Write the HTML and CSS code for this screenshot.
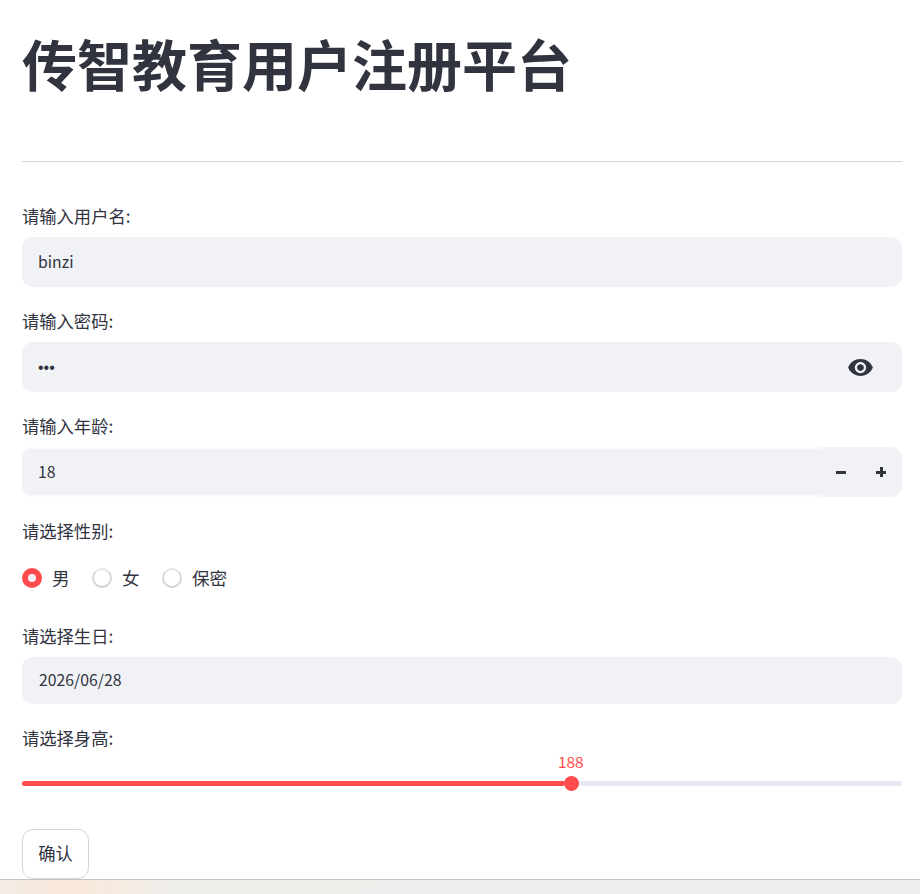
FILE: index.html
```html
<!DOCTYPE html>
<html>

<head>
    <meta charset="utf-8">
    <title>传智教育用户注册平台</title>
    <link rel="stylesheet" href="styles.css">
</head>

<body>

    <main class="page">
        <h1 class="title">传智教育用户注册平台</h1>
        <hr class="divider">

        <div class="field">
            <p class="label">请输入用户名:</p>
            <div class="box">binzi</div>
        </div>

        <div class="field">
            <p class="label">请输入密码:</p>
            <div class="box">
                <span class="dots">•••</span>
                <svg class="eye" viewBox="0 0 24 24" width="27" height="27">
                    <path fill="#31333f" d="M12 4.5C7 4.5 2.73 7.61 1 12c1.73 4.39 6 7.5 11 7.5s9.27-3.11 11-7.5c-1.73-4.39-6-7.5-11-7.5zM12 17c-2.76 0-5-2.24-5-5s2.24-5 5-5 5 2.24 5 5-2.24 5-5 5zm0-8c-1.66 0-3 1.34-3 3s1.34 3 3 3 3-1.34 3-3-1.34-3-3-3z"/>
                </svg>
            </div>
        </div>

        <div class="field">
            <p class="label">请输入年龄:</p>
            <div class="box number">
                <div class="number-value">18</div>
                <div class="step"><span class="minus"></span></div>
                <div class="step"><span class="plus"></span></div>
            </div>
        </div>

        <div class="field">
            <p class="label">请选择性别:</p>
            <div class="radios">
                <div class="radio"><span class="dot on"></span>男</div>
                <div class="radio"><span class="dot"></span>女</div>
                <div class="radio"><span class="dot"></span>保密</div>
            </div>
        </div>

        <div class="field">
            <p class="label">请选择生日:</p>
            <div class="box date">2026/06/28</div>
        </div>

        <div class="field">
            <p class="label">请选择身高:</p>
            <div class="slider">
                <div class="slider-value"><span>188</span></div>
                <div class="track">
                    <div class="fill"></div>
                    <div class="thumb"></div>
                    <div class="rest"></div>
                </div>
            </div>
        </div>

        <button class="confirm">确认</button>
    </main>

    <div class="strip"></div>

</body>

</html>
```

FILE: styles.css
```css
/* General styles */

html {
    background-color: white;
    height: 100%;
    font-family: "Noto Sans CJK SC", sans-serif;
    color: #31333f;
}

body {
    height: 100%;
    margin: 0;
    display: flex;
    flex-direction: column;
    overflow: hidden;
}

* {
    box-sizing: border-box;
}

.page {
    flex: 1;
    padding: 0 18px 0 22px;
}

/* Heading */

.title {
    margin: 0;
    padding-top: 22px;
    height: 134px;
    font-size: 55px;
    line-height: 80px;
    font-weight: 700;
}

.divider {
    margin: 27px 0 0;
    border: 0;
    border-top: 1px solid #d6d6d9;
}

/* Fields */

.field {
    margin-bottom: 23px;
}

.divider + .field {
    margin-top: 43px;
}

.label {
    margin: 0;
    height: 32px;
    font-size: 17.3px;
    line-height: 22px;
}

.box {
    height: 50px;
    padding: 0 16px 2px;
    display: flex;
    align-items: center;
    justify-content: space-between;
    background-color: #f0f2f6;
    border-radius: 11px;
    font-size: 15.8px;
}

.dots {
    padding-top: 3px;
    font-family: "Liberation Sans", sans-serif;
    font-size: 16px;
}

.eye {
    margin: 2px 12px 0 0;
}

/* Number input */

.number {
    padding: 0;
}

.number-value {
    flex: 1;
    height: 100%;
    padding: 0 0 1px 16px;
    display: flex;
    align-items: center;
    border-top: 2px solid #fbfbfc;
    border-bottom: 2px solid #fbfbfc;
}

.step {
    width: 40px;
    padding-right: 2px;
    display: flex;
    align-items: center;
    justify-content: center;
}

.minus,
.plus {
    display: block;
    position: relative;
    width: 10px;
    height: 3px;
    background-color: #31333f;
}

.plus::after {
    content: "";
    position: absolute;
    left: 3.5px;
    top: -3.5px;
    width: 3px;
    height: 10px;
    background-color: #31333f;
}

/* Radios */

.radios {
    display: flex;
    gap: 22.4px;
    height: 37px;
    padding-top: 14px;
    margin-bottom: 36px;
    font-size: 17.6px;
}

.radio {
    display: flex;
    align-items: center;
    height: 24px;
    line-height: 22px;
}

.dot {
    flex: none;
    width: 20px;
    height: 20px;
    margin-right: 10px;
    border-radius: 50%;
    background-color: white;
    border: 2px solid #d5d6d8;
    border-top-color: #e4e5e7;
    border-bottom-color: #cfd0d2;
}

.dot.on {
    border: 6px solid #ff4b4b;
    background-color: #f0f2f6;
}

/* Date */

.date {
    height: 47px;
    padding-left: 17px;
}

/* Slider */

.slider {
    margin-top: -8px;
    height: 55px;
}

.slider-value {
    padding-left: 536px;
    height: 20px;
    line-height: 20px;
    font-size: 15.4px;
    color: #ff4b4b;
}

.track {
    display: flex;
    align-items: center;
    margin-top: 4px;
    height: 16px;
}

.fill {
    width: 542px;
    height: 5px;
    background-color: #ff4b4b;
    border-radius: 3px 0 0 3px;
}

.thumb {
    flex: none;
    width: 15px;
    height: 15px;
    background-color: #ff4b4b;
    border-radius: 50%;
}

.rest {
    flex: 1;
    height: 5px;
    background-color: #e6e9f1;
    border-radius: 0 3px 3px 0;
}

/* Button */

.confirm {
    display: block;
    width: 67px;
    height: 50px;
    padding: 0 0 3px;
    border: 1px solid #d5d6d9;
    border-radius: 11px;
    background-color: white;
    color: #31333f;
    font-family: inherit;
    font-size: 17.3px;
}

/* Bottom strip */

.strip {
    flex: none;
    height: 15px;
    border-top: 1px solid #c4c4c4;
    background: linear-gradient(90deg, #f3ece6, #fae8d9 70px, #f1efec 170px, #efefef);
}
```
